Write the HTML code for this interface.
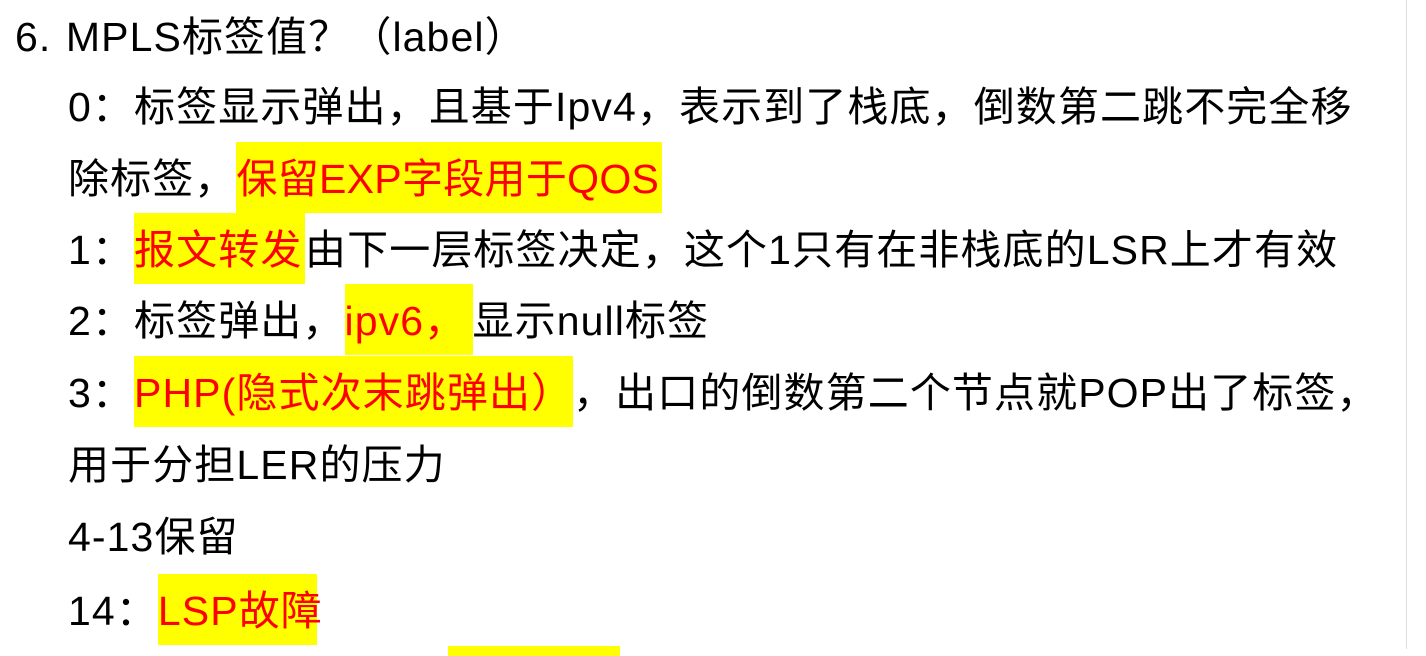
<!DOCTYPE html>
<html><head><meta charset="utf-8"><style>
html,body{margin:0;padding:0;background:#fff;}
body{width:1426px;height:649px;position:relative;overflow:hidden;font-family:"Liberation Sans","Noto Sans CJK SC",sans-serif;font-size:41px;letter-spacing:1.1px;color:#000;}
.l{position:absolute;left:68px;height:72px;line-height:74px;white-space:nowrap;}
.h{display:inline-block;background:#ffff00;color:#f00;height:71px;line-height:74px;vertical-align:top;}
.vl{position:absolute;left:1406px;top:0;width:1px;height:649px;background:#ddd;}
</style></head><body>
<div class="vl"></div>
<div class="l" style="left:15px;top:0">6.&nbsp;<span style="margin-left:2px">MPLS标签值？（label）</span></div>
<div class="l" style="top:70px">0：标签显示弹出，且基于Ipv4，表示到了栈底，倒数第二跳不完全移</div>
<div class="l" style="top:142px">除标签，<span class="h" style="width:426px;letter-spacing:0.3px">保留EXP字段用于QOS</span></div>
<div class="l" style="top:213px">1：<span class="h" style="width:171px">报文转发</span>由下一层标签决定，这个1只有在非栈底的LSR上才有效</div>
<div class="l" style="top:284px">2：标签弹出，<span class="h" style="width:128px">ipv6，</span>显示null标签</div>
<div class="l" style="top:356px">3：<span class="h" style="width:439px">PHP(隐式次末跳弹出）</span>，出口的倒数第二个节点就POP出了标签，</div>
<div class="l" style="top:428px">用于分担LER的压力</div>
<div class="l" style="top:500px">4-13保留</div>
<div class="l" style="top:574px">14：<span class="h" style="width:159px">LSP故障</span></div>
<div style="position:absolute;left:448px;top:646px;width:172px;height:10px;background:#ffff00"></div>
</body></html>
